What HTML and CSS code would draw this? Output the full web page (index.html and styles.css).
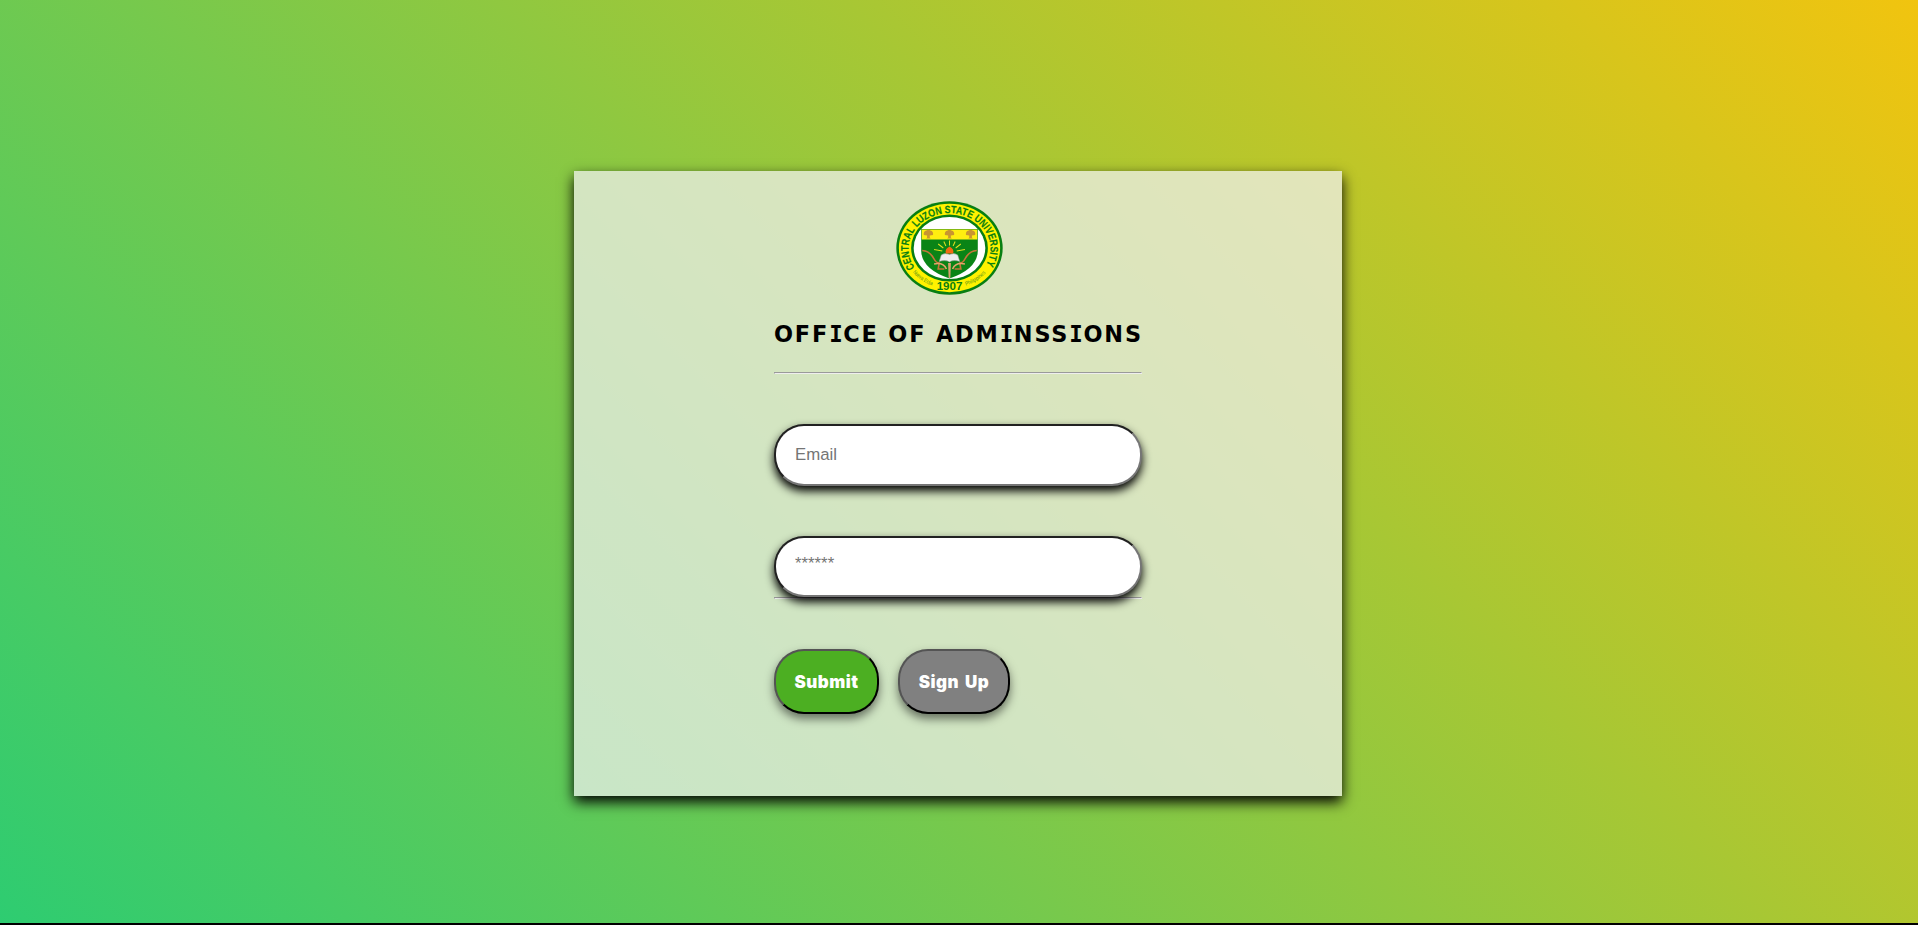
FILE: index.html
```html
<!DOCTYPE html>
<html lang="en">
<head>
<meta charset="utf-8">
<title>Office of Admissions</title>
<link rel="stylesheet" href="styles.css">
</head>
<body>
<main class="page">
<form class="card">
<svg class="seal" viewBox="0 0 104 94" preserveAspectRatio="none" role="img" aria-label="University seal">
<defs>
<path id="arc-top" d="M19 67.500 A39.800 35.500 0 1 1 85 67.500"/>
<path id="arc-left" d="M15.600 70.500 A45 40 0 0 0 37 85"/>
<path id="arc-right" d="M67 85 A45 40 0 0 0 88.400 70.500"/>
<g id="tree"><path d="M-4.500 .5 Q-5-3.500-2-4 Q0-5.500 2-4 Q5-3.500 4.500 .5 L1.300 1 L1.300 3 L2.200 4 H-2.200 L-1.300 3 L-1.300 1Z"/></g>
</defs>
<ellipse cx="52" cy="47" rx="51.700" ry="46.700" fill="#087f12"/>
<ellipse cx="52" cy="47" rx="49.200" ry="44.200" fill="#fff200"/>
<ellipse cx="52" cy="47" rx="37.300" ry="33.500" fill="#087f12"/>
<ellipse cx="52" cy="47" rx="34.800" ry="31" fill="#fff"/>
<path d="M24.500 28 H79.500 V50 Q79 68 52 77.500 Q25 68 24.500 50Z" fill="#0a8416"/>
<path d="M25 28.500 H79 V38.500 H25Z" fill="#ffee10"/>
<g fill="#c99530"><use href="#tree" x="31.500" y="33.500"/><use href="#tree" x="52" y="33.500"/><use href="#tree" x="72.500" y="33.500"/></g>
<path d="M52 39.500v5M46.500 40.500l2 4.500M57.500 40.500l-2 4.500M41 43l5 4M63 43l-5 4M37 48.500l8 1.500M67 48.500l-8 1.500" stroke="#dfdf20" stroke-width="1"/>
<path d="M44 54 Q48 51.500 52 53.500 Q56 51.500 60 54 L62 60.500 Q56 58.500 52 61 Q48 58.500 42 60.500Z" fill="#eee" stroke="#999" stroke-width=".5"/>
<path d="M48.500 52.500 Q47 48 52 45.500 Q57 48 55.500 52.500Z" fill="#f26a14"/>
<path d="M25.500 49.500 Q33 50 37 58 Q39 62 42 62 L41 68 H47 M78.500 49.500 Q71 50 67 58 Q65 62 62 62 L63 68 H57" fill="none" stroke="#c4763a" stroke-width="1.600"/>
<path d="M37 63 Q46 61 49 68 M67 63 Q58 61 55 68" fill="none" stroke="#e5a36e" stroke-width="1.600"/>
<path d="M50.600 62h2.800l-.600 15h-1.600Z" fill="#d9a06e"/>
<g class="seal-text">
<text class="seal-name"><textPath href="#arc-top" startOffset="1" textLength="155" lengthAdjust="spacingAndGlyphs">CENTRAL LUZON STATE UNIVERSITY</textPath></text>
<text class="seal-year" x="52" y="89" textLength="25" lengthAdjust="spacingAndGlyphs">1907</text>
<text class="seal-place"><textPath href="#arc-left" startOffset="1" textLength="23" lengthAdjust="spacingAndGlyphs">Nueva Ecija</textPath></text>
<text class="seal-place"><textPath href="#arc-right" startOffset="1" textLength="23" lengthAdjust="spacingAndGlyphs">Philippines</textPath></text>
</g>
</svg>
<h1 class="title">OFF<span class="cap-i">I</span>CE OF ADM<span class="cap-i">I</span>NSS<span class="cap-i">I</span>ONS</h1>
<hr class="rule">
<input class="field email" type="email" placeholder="Email">
<input class="field password" type="password" placeholder="******">
<hr class="rule">
<div class="actions">
<button class="btn submit" type="button">Submit</button>
<button class="btn signup" type="button">Sign Up</button>
</div>
</form>
</main>
</body>
</html>
```
FILE: styles.css
```css
* { box-sizing: border-box; }
body { margin: 0; height: 925px; background: #000; overflow: hidden; }
.page {
  height: 923px;
  padding-top: 171px;
  background: linear-gradient(45deg, #2ecc71, #f1c40f);
}
.card {
  width: 768px;
  height: 625px;
  margin-left: 574px;
  padding: 30px 200px 0;
  background: rgba(240, 240, 240, .73);
  box-shadow: 0 6px 13px #000;
}
.seal { display: block; width: 107px; height: 94px; margin-left: 122px; }
.seal-text { font-family: "Liberation Sans", Arial, sans-serif; fill: #087f12; }
.seal-name { font-size: 10.500px; font-weight: 700; stroke: #087f12; stroke-width: .2px; }
.seal-year { font-size: 11px; font-weight: 700; text-anchor: middle; }
.seal-place { font-size: 5.500px; fill: #4a8d1a; }
.title {
  margin: 25px 0 0;
  height: 28px;
  font: 700 22.400px/28px Verdana, "DejaVu Sans", sans-serif;
  letter-spacing: 1.830px;
  white-space: nowrap;
  color: #000;
}
.cap-i { font-family: Verdana, "DejaVu Sans Mono", monospace; letter-spacing: .700px; }
.rule { margin: 0; height: 2px; border: 1px solid; border-color: #9a9a9a #eee #eee #9a9a9a; }
.title + .rule { margin-top: 24px; }
.field {
  display: block;
  position: relative;
  width: 368px;
  padding: 0 19px;
  border: 2px inset #767676;
  border-radius: 30px;
  background: #fff;
  box-shadow: 0 5px 10px #000;
  font: 16.800px "Liberation Sans", Arial, sans-serif;
}
.field::placeholder { color: #757575; opacity: 1; }
.email { height: 62px; margin-top: 50px; padding-bottom: 1px; }
.password { height: 61px; margin-top: 50px; padding-bottom: 5px; }
.actions { display: flex; gap: 19px; margin-top: 50px; }
.btn {
  height: 65px;
  padding: 0;
  border: 2px outset #000;
  border-radius: 30px;
  color: #fff;
  font: 900 17px "Arial Black", Inter, sans-serif;
  letter-spacing: .5px;
  word-spacing: 2px;
  box-shadow: 0 5px 10px rgba(0, 0, 0, .5);
}
.submit { width: 105px; background: #4caf22; }
.signup { width: 112px; background: #808080; }
```
